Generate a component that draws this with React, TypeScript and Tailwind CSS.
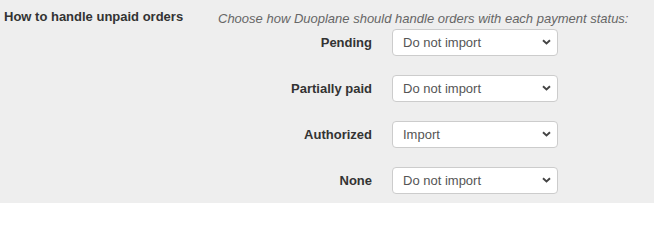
const rows = [
  { label: 'Pending', value: 'Do not import' },
  { label: 'Partially paid', value: 'Do not import' },
  { label: 'Authorized', value: 'Import' },
  { label: 'None', value: 'Do not import' },
]

function Chevron() {
  return (
    <svg width="9" height="6" viewBox="0 0 9 6" className="shrink-0 mb-[2px]">
      <polyline points="1,1.2 4.5,4.5 8,1.2" fill="none" stroke="#444" strokeWidth="1.9" />
    </svg>
  )
}

export default function App() {
  return (
    <div
      className="w-full h-[203px] bg-[#eeeeee] flex text-[13px] text-[#333333]"
      style={{ fontFamily: '"Liberation Sans", Arial, sans-serif' }}
    >
      {/* Setting label */}
      <div className="w-[218px] shrink-0 pl-[4px] pt-[8px]">
        <div className="font-bold leading-[18px]">How to handle unpaid orders</div>
      </div>

      {/* Setting options */}
      <div className="flex flex-col pt-[10px]">
        <p className="italic leading-[18px] text-[#666666]">
          Choose how Duoplane should handle orders with each payment status:
        </p>
        <div className="grid grid-cols-[154px_166px] gap-x-[20px] gap-y-[19px] mt-[1px]">
          {rows.map((row) => (
            <div key={row.label} className="contents">
              <div className="flex items-center justify-end font-bold">{row.label}</div>
              <div className="h-[27px] flex items-center justify-between bg-white border border-[#cccccc] rounded-[4px] pl-[10px] pr-[6px] text-[#555555]">
                <span className="leading-[18px]">{row.value}</span>
                <Chevron />
              </div>
            </div>
          ))}
        </div>
      </div>
    </div>
  )
}
